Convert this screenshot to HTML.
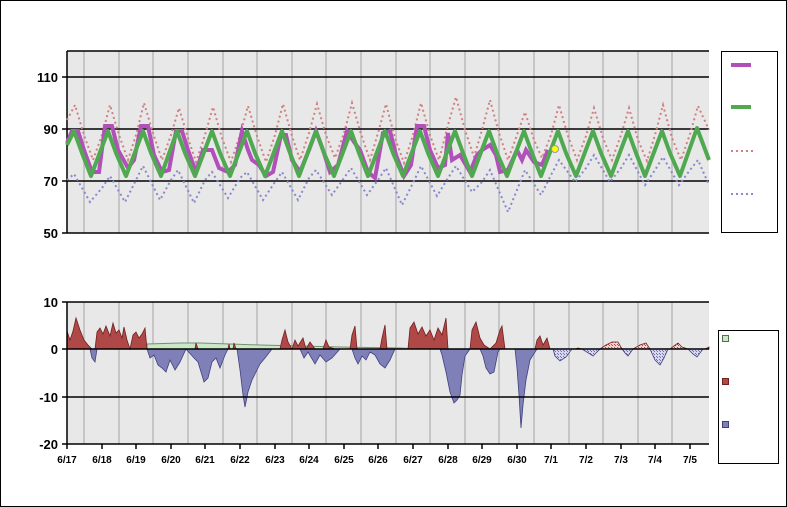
<!DOCTYPE html>
<html><head><meta charset="utf-8"><style>
html,body{margin:0;padding:0;background:#fff}
svg{display:block}
text{font-family:"Liberation Sans",Arial,sans-serif;font-weight:bold;fill:#000}
</style></head><body>
<svg width="787" height="507" viewBox="0 0 787 507" xmlns="http://www.w3.org/2000/svg">
<defs>
<pattern id="hr" width="3" height="3" patternUnits="userSpaceOnUse"><rect width="3" height="3" fill="#f4d0d0"/><path d="M0 0h1v1H0zM2 2h1v1H2z" fill="#c04040"/></pattern>
<pattern id="hb" width="3" height="3" patternUnits="userSpaceOnUse"><rect width="3" height="3" fill="#d6d6ee"/><path d="M0 0h1v1H0zM2 2h1v1H2z" fill="#7070b0"/></pattern>
</defs>
<rect x="0.5" y="0.5" width="786" height="506" fill="#fff" stroke="#000"/>
<!-- top chart -->
<rect x="67" y="51" width="642" height="182" fill="#e8e8e8"/>
<g stroke="#bbb" stroke-width="1.5">
<path d="M84 51V233M119 51V233M153 51V233M188 51V233M223 51V233M257 51V233M292 51V233M326 51V233M361 51V233M396 51V233M430 51V233M465 51V233M499 51V233M534 51V233M569 51V233M603 51V233M638 51V233M672 51V233"/>
</g>
<g stroke="#000" stroke-width="1.5">
<path d="M67 77H709M67 129H709M67 181H709M67 233H709M67 51H709M67 51V233"/>
<path d="M62 77H67M62 129H67M62 181H67M62 233H67"/>
</g>
<g font-size="13" text-anchor="end">
<text x="58" y="82">110</text><text x="58" y="134">90</text><text x="58" y="186">70</text><text x="58" y="238">50</text>
</g>
<polyline fill="none" stroke="#d08080" stroke-width="2" stroke-dasharray="2,3" points="67,120 75,105 84,135 93,160 102,135 110,105 119,135 128,160 136,135 144,103 153,133 162,160 171,135 179,108 188,138 196,162 205,135 213,107 222,138 231,162 240,135 248,106 257,136 266,162 275,135 283,104 292,136 300,160 309,133 317,104 326,135 335,158 344,133 352,103 361,134 370,160 378,133 386,104 395,138 404,163 413,135 421,103 430,135 439,160 448,125 456,97 465,130 474,157 482,130 490,100 499,133 508,160 517,135 525,112 534,140 542,158 551,135 559,105 568,136 577,160 586,136 594,108 603,138 612,160 621,135 629,108 638,140 647,161 655,135 663,105 672,138 681,160 690,134 698,106 709,130"/>
<polyline fill="none" stroke="#8888cc" stroke-width="2" stroke-dasharray="2,3" points="67,180 74,174 90,202 102,188 110,176 125,202 136,180 143,166 160,200 171,180 178,170 194,203 205,180 212,172 228,198 240,178 247,172 263,200 275,182 282,172 298,200 309,178 316,170 332,195 344,178 351,168 367,195 378,180 386,168 402,205 413,183 421,166 437,196 448,178 456,166 472,192 482,182 490,170 508,212 517,190 525,170 541,195 551,175 559,160 575,182 586,168 594,155 610,182 621,168 629,155 645,185 655,170 663,157 679,185 690,170 698,160 709,185"/>
<polyline fill="none" stroke="#b050b8" stroke-width="4" points="67,143 72,131 78,131 84,150 92,172 99,172 105,126 112,126 118,150 128,168 134,160 141,126 148,126 154,155 162,172 169,170 176,131 182,131 188,150 196,172 203,150 206,150 212,150 219,168 228,172 235,165 242,131 248,150 252,160 259,165 266,176 273,172 281,135 286,135 292,160 300,172 309,150 316,131 323,150 330,172 338,165 347,131 354,142 360,150 368,172 375,178 383,133 390,131 396,155 404,176 411,165 417,126 424,126 430,150 438,168 445,165 448,133 452,160 460,155 470,172 477,155 482,150 490,145 496,155 500,172 508,170 517,150 522,160 526,150 534,162 542,165 548,150"/>
<polyline fill="none" stroke="#50a850" stroke-width="4" stroke-linejoin="round" points="67,145 74,131 82,153 91,176 108,131 116,153 126,176 143,131 151,153 161,176 177,131 185,153 195,176 212,131 220,153 230,176 247,131 255,153 265,176 282,131 290,153 299,176 316,131 324,153 334,176 351,131 359,153 368,176 385,131 393,153 403,176 420,131 428,153 438,176 455,131 463,153 472,176 489,131 497,153 507,176 524,131 532,153 541,176 558,131 566,153 576,176 593,131 601,153 611,176 628,131 636,153 645,176 662,131 670,153 680,176 697,128 709,160"/>
<circle cx="555" cy="149" r="3.5" fill="#ffff00" stroke="#999" stroke-width="1"/>
<rect x="721.5" y="51.5" width="56" height="181" fill="#fff" stroke="#000"/>
<path d="M731 65h20" stroke="#b050b8" stroke-width="4"/>
<path d="M731 107h20" stroke="#50a850" stroke-width="4"/>
<path d="M731 151h22" stroke="#d08080" stroke-width="2" stroke-dasharray="2,3"/>
<path d="M731 194h22" stroke="#8888cc" stroke-width="2" stroke-dasharray="2,3"/>
<!-- bottom chart -->
<rect x="67" y="302" width="642" height="142" fill="#e8e8e8"/>
<g stroke="#bbb" stroke-width="1.5">
<path d="M84 302V444M119 302V444M153 302V444M188 302V444M223 302V444M257 302V444M292 302V444M326 302V444M361 302V444M396 302V444M430 302V444M465 302V444M499 302V444M534 302V444M569 302V444M603 302V444M638 302V444M672 302V444"/>
</g>
<polygon fill="#c8e8c8" stroke="#709070" stroke-width="1" points="147,349 147,344 180,343 200,343 230,344 260,345 300,346 340,347 400,348 420,349"/>
<polygon fill="#b04848" stroke="#702020" stroke-width="0.8" points="67,349 67,331 70,340 73,331 76,318 80,330 84,340 88,345 92,349 95,349 97,332 100,328 103,334 106,326 110,336 113,323 116,333 119,330 122,338 124,327 127,340 130,349 133,335 136,332 139,338 142,334 145,328 147,349"/>
<polygon fill="#b04848" stroke="#702020" stroke-width="0.8" points="195,349 196,343 198,349 228,349 229,344 230,349 233,349 234,343 236,349 280,349 282,340 285,330 288,342 292,349 295,340 298,346 303,338 306,349 310,342 315,349 323,349 326,340 329,347 335,349 350,349 352,335 355,326 357,349 380,349 382,338 385,325 387,349 408,349 410,328 414,322 418,334 422,327 426,336 430,330 434,340 438,328 442,335 446,318 448,349 470,349 472,330 476,322 480,338 484,345 490,349 496,343 500,330 502,326 505,349 535,349 537,340 540,336 543,345 547,338 550,349"/>
<polygon fill="#8080b8" stroke="#404080" stroke-width="0.8" points="90,349 92,358 95,362 97,349 147,349 150,358 154,355 158,365 162,368 166,372 170,360 175,370 180,362 186,349 194,358 198,362 201,372 204,382 208,378 212,362 216,358 220,368 225,355 228,349 237,349 240,370 243,395 245,407 248,392 252,380 256,372 260,364 265,358 272,349 300,349 304,358 308,352 315,364 320,355 326,362 332,358 340,349 352,349 355,358 358,364 362,356 366,360 370,352 375,355 380,364 385,368 390,360 395,349 440,349 442,355 446,372 450,392 454,403 457,400 460,395 462,375 465,356 470,349 480,349 483,356 486,368 490,374 494,372 498,352 500,349 515,349 517,368 519,395 521,428 523,405 526,380 530,360 535,352 537,349"/>
<polygon fill="url(#hb)" stroke="#404080" stroke-width="0.8" points="553,349 555,356 560,361 566,357 572,349 582,349 590,354 593,356 600,349 622,349 625,353 628,356 633,349 650,349 655,360 660,365 664,358 668,349 688,349 693,354 697,357 703,349"/>
<polygon fill="url(#hr)" stroke="#702020" stroke-width="0.8" points="575,349 578,348 582,349 600,349 606,345 612,342 618,342 622,349 633,349 640,345 646,343 650,349 670,349 674,346 678,343 682,347 688,349 705,349 709,347 709,349"/>
<g stroke="#000" stroke-width="1.5">
<path d="M67 302H709M67 349H709M67 397H709M67 444H709M67 302V444"/>
<path d="M62 302H67M62 349H67M62 397H67M62 444H67"/>
<path d="M67 444v5M102 444v5M136 444v5M171 444v5M205 444v5M240 444v5M275 444v5M309 444v5M344 444v5M378 444v5M413 444v5M448 444v5M482 444v5M517 444v5M551 444v5M586 444v5M621 444v5M655 444v5M690 444v5"/>
</g>
<g font-size="13" text-anchor="end">
<text x="58" y="307">10</text><text x="58" y="354">0</text><text x="58" y="402">-10</text><text x="58" y="449">-20</text>
</g>
<g font-size="10" text-anchor="middle">
<text x="67" y="463">6/17</text><text x="102" y="463">6/18</text><text x="136" y="463">6/19</text><text x="171" y="463">6/20</text><text x="205" y="463">6/21</text><text x="240" y="463">6/22</text><text x="275" y="463">6/23</text><text x="309" y="463">6/24</text><text x="344" y="463">6/25</text><text x="378" y="463">6/26</text><text x="413" y="463">6/27</text><text x="448" y="463">6/28</text><text x="482" y="463">6/29</text><text x="517" y="463">6/30</text><text x="551" y="463">7/1</text><text x="586" y="463">7/2</text><text x="621" y="463">7/3</text><text x="655" y="463">7/4</text><text x="690" y="463">7/5</text>
</g>
<rect x="718.5" y="330.5" width="60" height="133" fill="#fff" stroke="#000"/>
<rect x="722.5" y="335.5" width="6" height="6" fill="#c8e8c8" stroke="#507050"/>
<rect x="722.5" y="378.5" width="6" height="6" fill="#b04848" stroke="#702020"/>
<rect x="722.5" y="421.5" width="6" height="6" fill="#8080b8" stroke="#404080"/>
</svg>
</body></html>
